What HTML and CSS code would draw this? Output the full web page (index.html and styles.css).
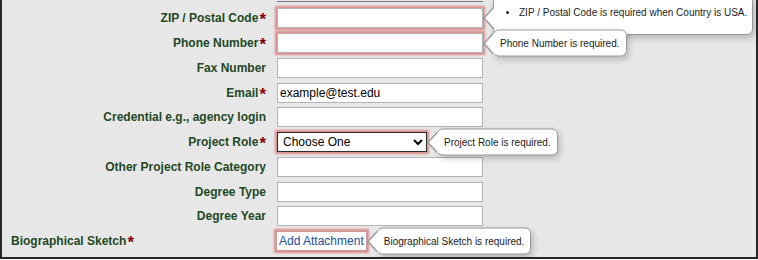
FILE: index.html
```html
<!DOCTYPE html>
<html lang="en">
  <head>
    <meta charset="utf-8" />
    <title>Contact Details</title>
    <link rel="stylesheet" href="styles.css">
  </head>
  <body>
    <div class="frame">
      <div class="cutoff"></div>
      <form class="contact-form">
        <div class="row">
          <label class="lbl" for="zip">ZIP / Postal Code<span class="req">*</span></label>
          <div class="field">
            <div class="ctl">
              <input id="zip" class="txt invalid" type="text">
              <div class="tip tip-list">
                <ul>
                  <li>ZIP / Postal Code is required when Country is USA.</li>
                </ul>
              </div>
            </div>
          </div>
        </div>
        <div class="row">
          <label class="lbl" for="phone">Phone Number<span class="req">*</span></label>
          <div class="field">
            <div class="ctl">
              <input id="phone" class="txt invalid" type="text">
              <div class="tip">Phone Number is required.</div>
            </div>
          </div>
        </div>
        <div class="row">
          <label class="lbl" for="fax">Fax Number</label>
          <div class="field"><input id="fax" class="txt" type="text"></div>
        </div>
        <div class="row">
          <label class="lbl" for="email">Email<span class="req">*</span></label>
          <div class="field"><input id="email" class="txt" type="text" value="example@test.edu"></div>
        </div>
        <div class="row">
          <label class="lbl" for="credential">Credential e.g., agency login</label>
          <div class="field"><input id="credential" class="txt" type="text"></div>
        </div>
        <div class="row">
          <label class="lbl" for="role">Project Role<span class="req">*</span></label>
          <div class="field">
            <div class="ctl">
              <select id="role" class="sel invalid">
                <option>Choose One</option>
              </select>
              <div class="tip">Project Role is required.</div>
            </div>
          </div>
        </div>
        <div class="row">
          <label class="lbl" for="role-other">Other Project Role Category</label>
          <div class="field"><input id="role-other" class="txt" type="text"></div>
        </div>
        <div class="row">
          <label class="lbl" for="degree-type">Degree Type</label>
          <div class="field"><input id="degree-type" class="txt" type="text"></div>
        </div>
        <div class="row">
          <label class="lbl" for="degree-year">Degree Year</label>
          <div class="field"><input id="degree-year" class="txt" type="text"></div>
        </div>
        <div class="row">
          <label class="lbl lbl-left">Biographical Sketch<span class="req">*</span></label>
          <div class="field">
            <div class="ctl">
              <button type="button" class="attach invalid">Add Attachment</button>
              <div class="tip">Biographical Sketch is required.</div>
            </div>
          </div>
        </div>
      </form>
    </div>
  </body>
</html>
```

FILE: styles.css
```css
body {
  margin: 0;
  background: #ffffff;
  font-family: "Liberation Sans", Arial, sans-serif;
}

.frame {
  box-sizing: border-box;
  width: 758px;
  height: 259px;
  background-color: #e7e7e7;
  border: 2px solid #262626;
  border-top: none;
  overflow: hidden;
}

/* bottom edge of the field above, scrolled out of view */
.cutoff {
  box-sizing: border-box;
  width: 206px;
  height: 2px;
  margin-left: 275px;
  border-bottom: 1px solid #7a7a7a;
}

.contact-form {
  padding-top: 4px;
}

.row {
  display: grid;
  grid-template-columns: 264px 1fr;
  column-gap: 11px;
  align-items: center;
  height: 24.75px;
}

.lbl {
  text-align: right;
  font-size: 12px;
  font-weight: bold;
  color: #234823;
  white-space: nowrap;
}

.lbl-left {
  text-align: left;
  padding-left: 9px;
}

.req {
  color: #8b0000;
  font-size: 17px;
  line-height: 0;
  vertical-align: -3px;
  margin-left: 1px;
}

.field {
  display: flex;
  align-items: center;
}

.ctl {
  position: relative;
  display: flex;
}

.txt {
  box-sizing: border-box;
  width: 206px;
  height: 20px;
  margin: 0;
  padding: 0 2px;
  border: 1px solid #b4b4b4;
  background: #ffffff;
  font-family: "Liberation Sans", Arial, sans-serif;
  font-size: 12px;
  color: #000000;
}

.sel {
  box-sizing: border-box;
  width: 150px;
  height: 20px;
  margin: 0;
  padding: 0 1px;
  border: 1px solid #2b2b2b;
  border-radius: 0;
  background: #ffffff;
  font-family: "Liberation Sans", Arial, sans-serif;
  font-size: 12px;
  color: #000000;
}

.attach {
  box-sizing: border-box;
  height: 20px;
  margin: 0 0 0 -1px;
  padding: 0 2px;
  border: 1px solid #c99;
  background: #ffffff;
  font-family: "Liberation Sans", Arial, sans-serif;
  font-size: 12px;
  color: #1b4e9b;
}

.invalid {
  box-shadow: 0 0 2px 2px rgba(214, 80, 80, 0.6);
}

.tip {
  position: absolute;
  left: calc(100% + 10px);
  top: 50%;
  transform: translateY(-50%);
  padding: 6px 6px;
  background: #ffffff;
  border: 1px solid #9a9a9a;
  border-radius: 6px;
  box-shadow: 2px 3px 6px rgba(0, 0, 0, 0.22);
  font-size: 10px;
  line-height: 13px;
  color: #1a1a1a;
  white-space: nowrap;
}

.tip::before,
.tip::after {
  content: "";
  position: absolute;
  top: 50%;
  margin-top: -11px;
  border-style: solid;
  border-color: transparent;
}

.tip::before {
  left: -11px;
  border-width: 11px 10px 11px 0;
  border-right-color: #9a9a9a;
}

.tip::after {
  left: -9px;
  border-width: 11px 10px 11px 0;
  border-right-color: #ffffff;
}

.tip-list {
  top: -13px;
  transform: none;
  padding: 10px 5px 14px 0;
  line-height: 14px;
}

.tip-list::before,
.tip-list::after {
  top: 11px;
  margin-top: 0;
}

.tip-list ul {
  margin: 0;
  padding-left: 25px;
}
```
